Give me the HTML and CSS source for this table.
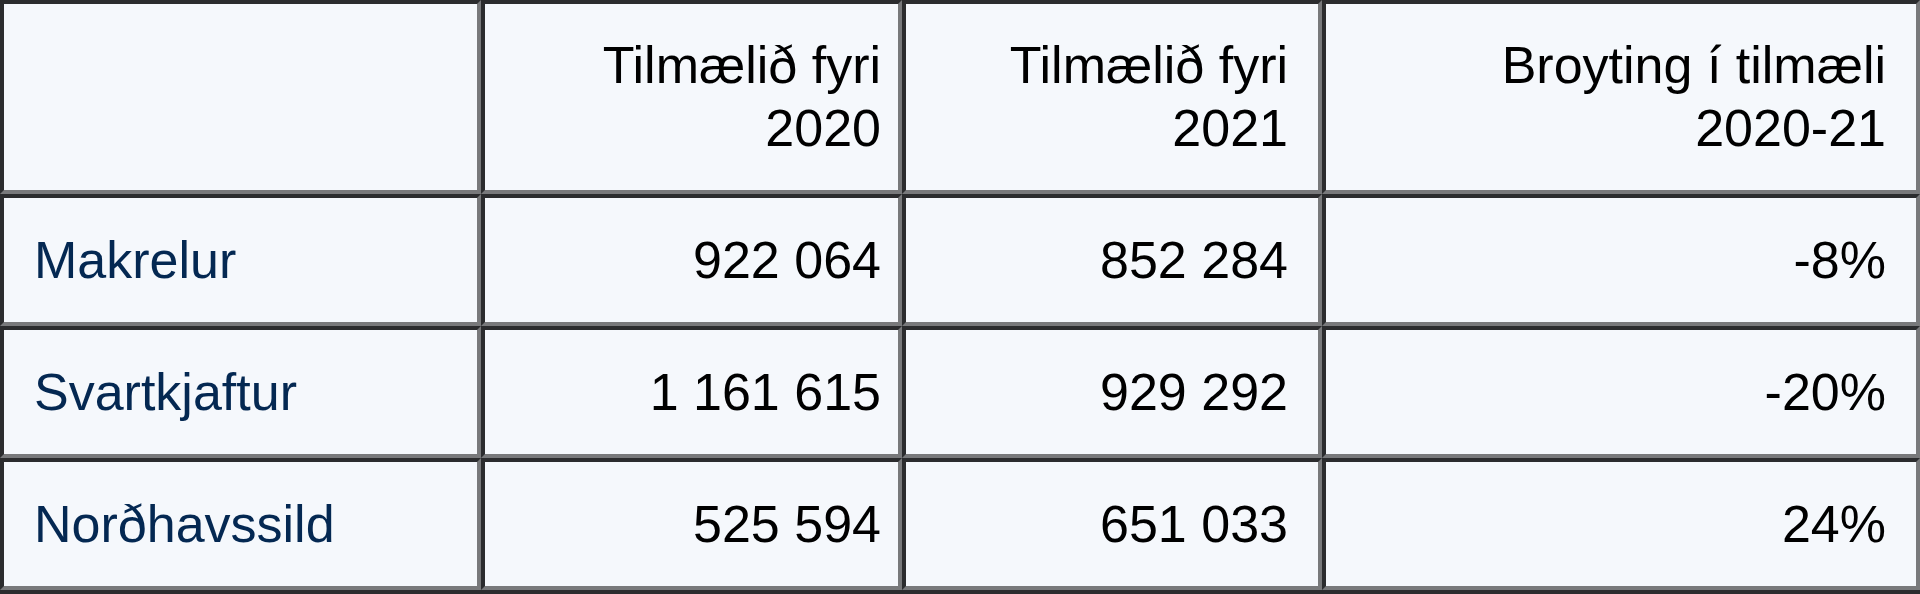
FILE: index.html
```html
<!DOCTYPE html>
<html lang="fo">
<head>
<meta charset="utf-8">
<title>Tilmæli</title>
<link rel="stylesheet" href="styles.css">
</head>
<body>
<table class="quota">
  <colgroup>
    <col class="c1">
    <col class="c2">
    <col class="c3">
    <col class="c4">
  </colgroup>
  <tr class="head">
    <th></th>
    <th class="y20">Tilmælið fyri 2020</th>
    <th>Tilmælið fyri 2021</th>
    <th>Broyting í tilmæli 2020-21</th>
  </tr>
  <tr class="row">
    <td class="name">Makrelur</td>
    <td class="y20">922 064</td>
    <td>852 284</td>
    <td>-8%</td>
  </tr>
  <tr class="row">
    <td class="name">Svartkjaftur</td>
    <td class="y20">1 161 615</td>
    <td>929 292</td>
    <td>-20%</td>
  </tr>
  <tr class="row">
    <td class="name">Norðhavssild</td>
    <td class="y20">525 594</td>
    <td>651 033</td>
    <td>24%</td>
  </tr>
</table>
</body>
</html>
```

FILE: styles.css
```css
html {
  background: #2b2c2e;
}
body {
  margin: 0;
  font-family: "Liberation Sans", Arial, sans-serif;
}
.quota {
  width: 1920px;
  table-layout: fixed;
  border-collapse: separate;
  border-spacing: 0;
  border-bottom: 4px solid #2b2c2e;
}
.c1 { width: 481px; }
.c2 { width: 421px; }
.c3 { width: 420px; }
.c4 { width: 598px; }
.quota th,
.quota td {
  background: #f5f8fc;
  color: #000;
  font-size: 52px;
  font-weight: normal;
  line-height: 63px;
  text-align: right;
  vertical-align: middle;
  padding: 0 30px;
  border-style: solid;
  border-width: 4px;
  border-color: #2b2c2e #78797b #78797b #2b2c2e;
}
.quota .y20 {
  padding-right: 17px;
}
.head { height: 194px; }
.row { height: 132px; }
.quota td.name {
  text-align: left;
  color: #042852;
}
```
